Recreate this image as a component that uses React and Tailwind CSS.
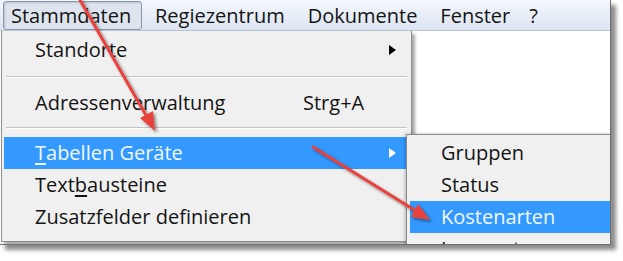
import React from 'react';

const Row = ({ children, active, right, arrow }) => (
  <div
    className={
      'mx-[2px] flex h-[32px] items-center pl-[31px] pr-[13px] ' +
      (active ? 'bg-[#3399ff] text-[#f2f8ff]' : 'text-[#141414]')
    }
  >
    <span className="w-[268px] whitespace-nowrap">{children}</span>
    {right && <span className="whitespace-nowrap">{right}</span>}
    {arrow && (
      <span
        className={
          'ml-auto h-0 w-0 border-y-[5px] border-l-[7px] border-y-transparent ' +
          (active ? 'border-l-white' : 'border-l-black')
        }
      />
    )}
  </div>
);

const Separator = ({ h }) => (
  <div className={'mx-[4px] flex items-center ' + h}>
    <div className="h-[2px] w-full border-t border-b border-t-[#c4c4c4] border-b-white" />
  </div>
);

const SubRow = ({ children, active }) => (
  <div
    className={
      'ml-[3px] flex h-[32px] items-center pl-[31px] whitespace-nowrap ' +
      (active ? 'bg-[#3399ff] text-[#f2f8ff]' : 'text-[#141414]')
    }
  >
    {children}
  </div>
);

const App = () => {
  return (
    <div className="relative h-[261px] w-[623px] overflow-hidden bg-white font-['Open_Sans',sans-serif] text-[20px]">
      <div className="flex h-[245px] w-[611px] flex-col overflow-hidden border-r border-b border-[#6f6f6f] bg-white shadow-[5px_5px_4px_rgba(0,0,0,0.45)]">
        {/* menu bar */}
        <div className="flex h-[31px] shrink-0 items-end border-b border-[#b9c4d3] bg-gradient-to-b from-[#f4f7fc] to-[#dce5f2] text-[#141414]">
          <div className="ml-[3px] flex h-[29px] w-[139px] items-center rounded-[3px] border border-[#8799ae] bg-[#dde4ee] pl-[7px] shadow-[inset_1px_1px_2px_rgba(0,0,0,0.15)]">
            Stammdaten
          </div>
          <div className="flex h-[29px] items-center pl-[13px]">Regiezentrum</div>
          <div className="flex h-[29px] items-center pl-[23px]">Dokumente</div>
          <div className="flex h-[29px] items-center pl-[23px]">Fenster</div>
          <div className="flex h-[29px] items-center pl-[19px]">?</div>
        </div>

        {/* window body */}
        <div className="relative flex-1">
          {/* dropdown */}
          <div className="absolute left-[1px] top-0 h-[211px] w-[411px] border-l border-r border-b border-[#8c8c8c] bg-[#f0f0f0] pt-[3px] shadow-[3px_3px_3px_rgba(0,0,0,0.35)]">
            <Row arrow>Standorte</Row>
            <Separator h="h-[21px]" />
            <Row right="Strg+A">Adressenverwaltung</Row>
            <Separator h="h-[18px]" />
            <Row active arrow>
              <span className="underline underline-offset-[3px]">T</span>abellen Geräte
            </Row>
            <Row>
              Text<span className="underline underline-offset-[3px]">b</span>austeine
            </Row>
            <Row>Zusatzfelder definieren</Row>
          </div>

          {/* submenu */}
          <div className="absolute left-[406px] top-[103px] h-[150px] w-[230px] border-l border-t border-[#8c8c8c] bg-[#f0f0f0] pt-[2px] shadow-[-1px_0_3px_rgba(0,0,0,0.25)]">
            <SubRow>Gruppen</SubRow>
            <SubRow>Status</SubRow>
            <SubRow active>Kostenarten</SubRow>
            <SubRow>Lagerorte</SubRow>
          </div>
        </div>
      </div>

      {/* red annotation arrows */}
      <svg className="absolute inset-0" width="623" height="261" viewBox="0 0 623 261">
        <defs>
          <filter id="sh" x="-20%" y="-20%" width="140%" height="140%">
            <feDropShadow dx="2" dy="2" stdDeviation="1.5" floodColor="#000" floodOpacity="0.45" />
          </filter>
        </defs>
        <g filter="url(#sh)" fill="#e8423d" stroke="#e8423d">
          <line x1="80" y1="0" x2="147" y2="117" strokeWidth="3" strokeLinecap="round" />
          <polygon points="155,131 140,118 153,111" stroke="none" />
          <line x1="313" y1="147" x2="416" y2="211" strokeWidth="3" strokeLinecap="round" />
          <polygon points="430,220 411,217 418,204" stroke="none" />
        </g>
      </svg>
    </div>
  );
};

export default App;
